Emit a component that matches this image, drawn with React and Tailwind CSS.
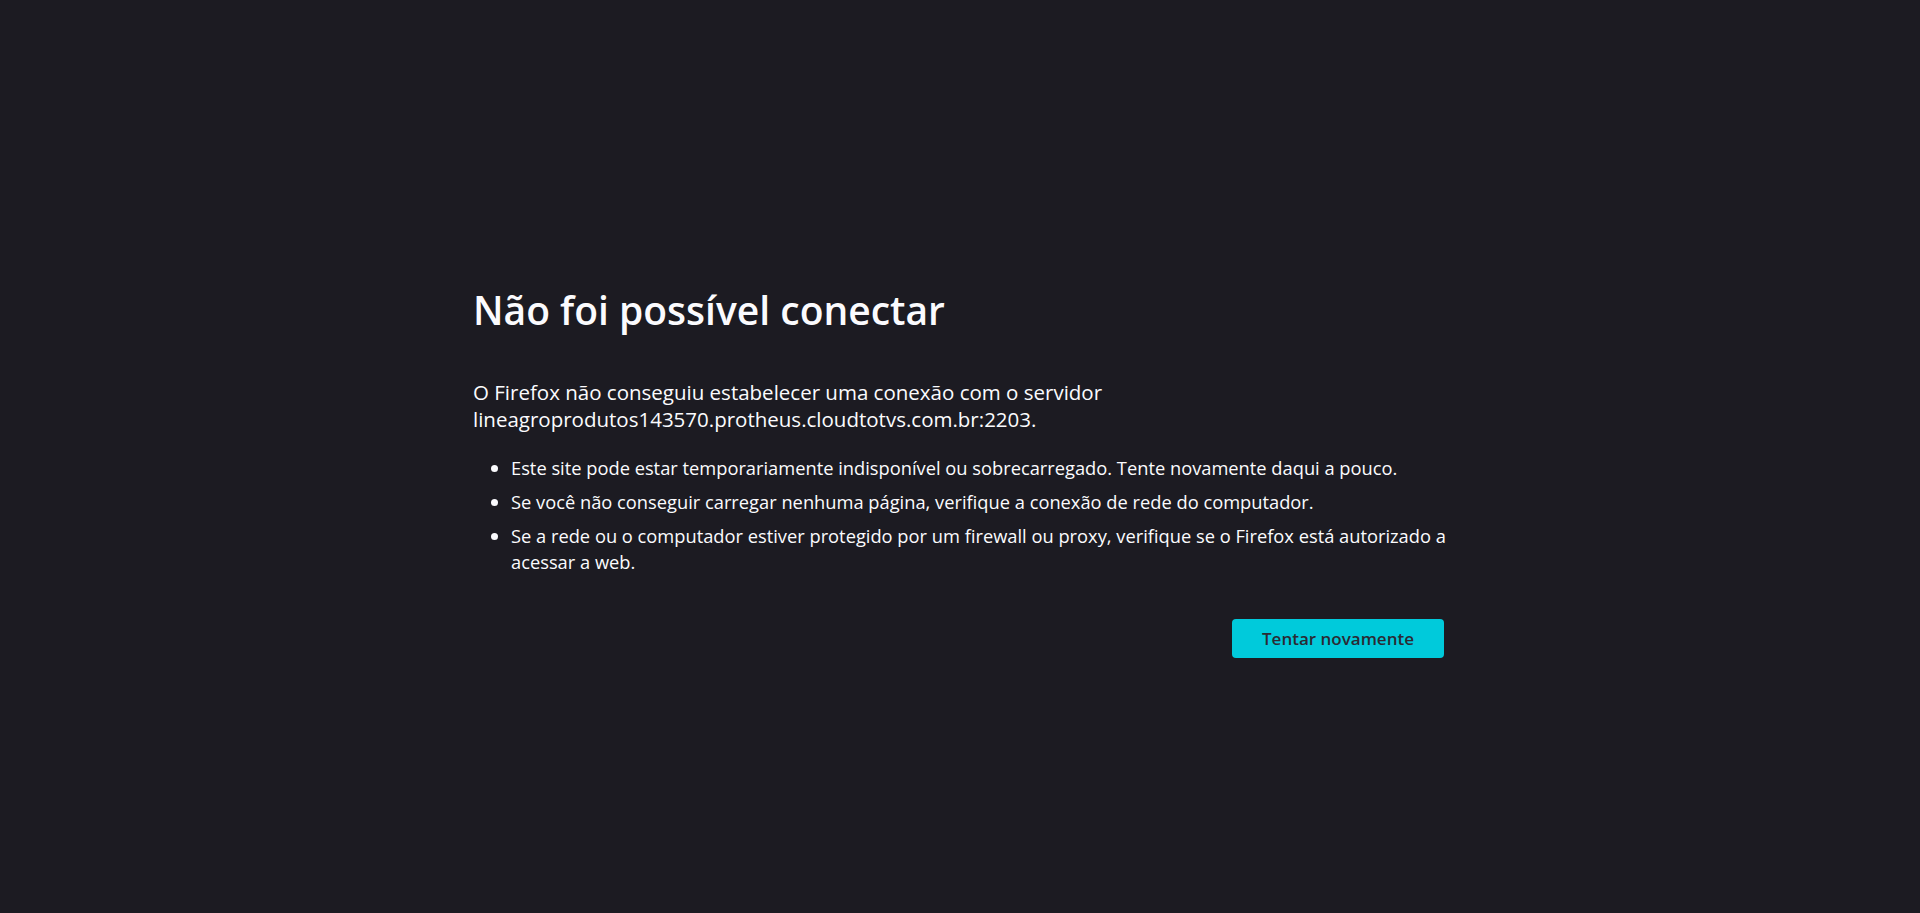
import React from "react";

const bullets = [
  "Este site pode estar temporariamente indisponível ou sobrecarregado. Tente novamente daqui a pouco.",
  "Se você não conseguir carregar nenhuma página, verifique a conexão de rede do computador.",
  <>
    Se a rede ou o computador estiver protegido por um firewall ou proxy, verifique se o Firefox está autorizado a
    <br />
    acessar a web.
  </>,
];

export default function App() {
  return (
    <div
      className="min-h-screen w-full bg-[#1c1b22] text-[#fbfbfe]"
      style={{ fontFamily: '"Open Sans", "Noto Sans", sans-serif' }}
    >
      <div className="mx-auto w-[974px] pr-[3px] pt-[287px]">
        <h1 className="text-[39px] font-semibold leading-[1.2]">Não foi possível conectar</h1>

        <p className="mt-[45px] text-[20.5px] leading-[27px]">
          O Firefox não conseguiu estabelecer uma conexão com o servidor
          lineagroprodutos143570.protheus.cloudtotvs.com.br:2203.
        </p>

        <ul className="mt-[22px] list-disc pl-[38px] text-[18.3px] leading-[26px]">
          {bullets.map((b, i) => (
            <li key={i} className="mb-[8px] whitespace-nowrap">
              {b}
            </li>
          ))}
        </ul>

        <div className="mt-[44px] flex justify-end">
          <button
            type="button"
            className="h-[39px] w-[212px] rounded-[4px] bg-[#00cadb] text-[17px] font-semibold text-[#2b2a33]"
          >
            Tentar novamente
          </button>
        </div>
      </div>
    </div>
  );
}
